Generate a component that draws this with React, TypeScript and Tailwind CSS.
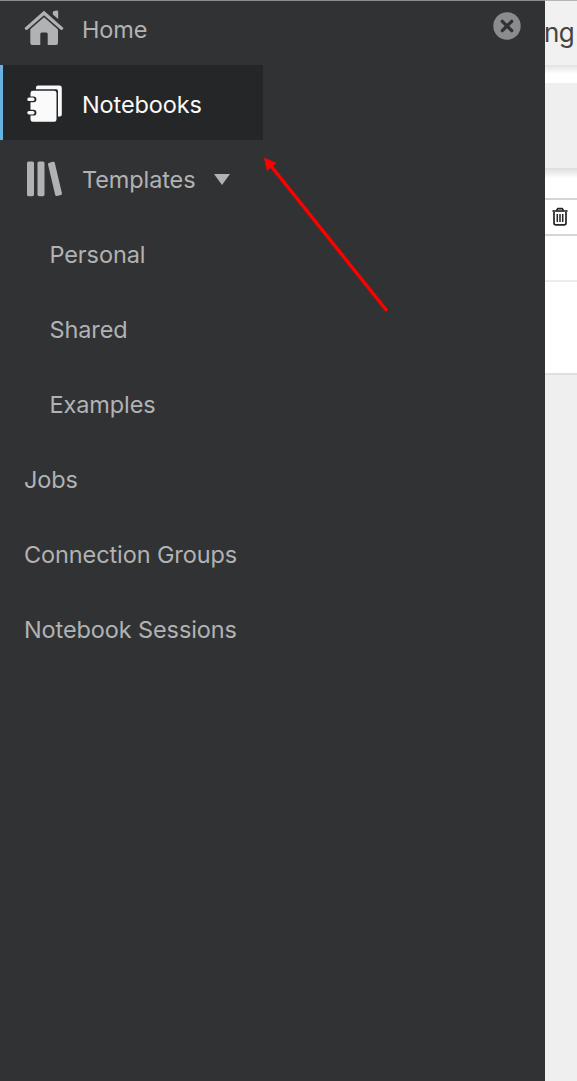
import type { ReactNode } from 'react';

function HomeIcon() {
  return (
    <svg width="40" height="36" viewBox="0 0 40 36" fill="currentColor" aria-hidden="true">
      <path d="M20 .8.8 17.800Q.2 19.800 3 20L20 5.200 37 20q2.800-.2 2.200-2.200Z" />
      <path d="M28.800 2.600Q28.800 1.300 30 1L32.800 .4Q34.200 .3 34.200 1.700V9L28.800 4.500Z" />
      <path d="M20 7.300 6.300 19.200V33q0 2 2 2H16.300V24q0-1.500 1.500-1.500h4.400q1.500 0 1.500 1.500V35H32q2 0 2-2V19.400Z" />
    </svg>
  );
}

function NotebookIcon() {
  return (
    <svg width="36" height="38" viewBox="0 0 36 38" fill="currentColor" aria-hidden="true">
      <path d="M9 2.500Q9 .5 11 .5H32.500Q34.800 .5 34.800 2.800V29.500Q34.800 31.500 32.800 31.500H31V6Q31 4.200 29.200 4.200H9Z" />
      <path d="M6 5.700H27Q29.500 5.700 29.500 8V34.500Q29.500 36.800 27.200 36.800H6Q3.500 36.800 3.500 34.500V30.600H6.500a2.700 2.700 0 0 0 0-5.800H3.500V17.200H6.500a2.700 2.700 0 0 0 0-5.800H3.500V8Q3.500 5.700 6 5.700Z" />
      <rect x=".3" y="12.500" width="7.200" height="3.600" rx="1.700" />
      <rect x=".3" y="25.900" width="7.200" height="3.600" rx="1.700" />
    </svg>
  );
}

function TemplatesIcon() {
  return (
    <svg width="36" height="36" viewBox="0 0 36 36" fill="currentColor" aria-hidden="true">
      <rect x="0" y=".5" width="7" height="34.700" rx="1.600" />
      <rect x="10.500" y=".5" width="7" height="34.700" rx="1.600" />
      <rect x="24.500" y=".8" width="7" height="34.200" rx="1.600" transform="rotate(-13.300 28 18)" />
    </svg>
  );
}

function CloseIcon() {
  return (
    <svg width="28" height="28" viewBox="0 0 28 28" aria-hidden="true">
      <circle cx="14" cy="14" r="13.700" fill="#8a8d8f" />
      <path d="m9.300 9.300 9.400 9.400m0-9.400-9.400 9.400" stroke="#303133" strokeWidth="3.300" strokeLinecap="round" />
    </svg>
  );
}

function TrashIcon() {
  return (
    <svg width="16" height="19" viewBox="0 0 16 19" fill="none" stroke="#252525" aria-hidden="true">
      <path d="M4.500 3.500 5.800 1.500h4.400l1.300 2" fill="#aaa" strokeWidth="1.500" />
      <path d="M.4 4h15.200" strokeWidth="1.600" />
      <path d="M2 5v11q0 1.800 1.800 1.800h8.400q1.800 0 1.800-1.800V5" strokeWidth="1.700" />
      <path d="M5.300 7v8M8 7v8M10.700 7v8" strokeWidth="1.500" />
    </svg>
  );
}

function Item({ icon, label, active = false, sub = false, children }: {
  icon?: ReactNode; label: string; active?: boolean; sub?: boolean; children?: ReactNode;
}) {
  return (
    <a className={`flex h-[75px] w-[263px] shrink-0 items-center whitespace-nowrap border-l-[3px] ${active ? 'border-[#69b3e3] bg-[#252628] text-[#fafafa]' : 'border-transparent text-[#b1b2b4]'} ${sub ? 'pl-[46.500px]' : 'pl-[21px]'}`}>
      {icon && <span className="flex w-[58px] shrink-0">{icon}</span>}
      <span className="pt-[5px] tracking-[-0.11px]">{label}</span>
      {children}
    </a>
  );
}

export default function App() {
  return (
    <div className="relative flex h-[1081px] w-[577px] overflow-hidden bg-[#efefef] font-['Inter',sans-serif] text-[23.500px]">
      <aside className="flex h-full w-[545px] shrink-0 items-start justify-between overflow-hidden border-t border-[#8c8f91] bg-[#313234]">
        <nav className="-mt-[11px] flex flex-col">
          <Item icon={<span className="pt-px"><HomeIcon /></span>} label="Home" />
          <Item icon={<span className="ml-[3px] pt-[3px]"><NotebookIcon /></span>} label="Notebooks" active />
          <Item icon={<span className="ml-[3px] pt-[3px]"><TemplatesIcon /></span>} label="Templates">
            <svg width="16" height="11" viewBox="0 0 16 11" fill="currentColor" className="ml-[19px] mt-[4px]" aria-hidden="true"><path d="M0 0h16L8 11Z" /></svg>
          </Item>
          <Item label="Personal" sub />
          <Item label="Shared" sub />
          <Item label="Examples" sub />
          <Item label="Jobs" />
          <Item label="Connection Groups" />
          <Item label="Notebook Sessions" />
        </nav>
        <button aria-label="Close" className="mr-6 mt-[11px]"><CloseIcon /></button>
      </aside>
      <main className="flex min-w-0 flex-1 flex-col overflow-hidden">
        <header className="flex h-[65px] shrink-0 items-center border-t border-[#b5b5b5] bg-[#f1f1f1] pb-px text-[26px] text-[#444]">
          <span className="-ml-px tracking-[-0.5px]">ng</span>
        </header>
        <div className="h-[18px] shrink-0 bg-linear-to-b from-[#e2e2e2] via-white via-50% to-white" />
        <div className="h-[85px] shrink-0 bg-[#efefef]" />
        <div className="h-[30px] shrink-0 bg-linear-to-b from-[#dedede] via-white via-35% to-white" />
        <div className="flex h-[38px] shrink-0 items-center border-y-2 border-[#d5d5d5] bg-white pb-[2px] pl-[7px]"><TrashIcon /></div>
        <div className="h-[46px] shrink-0 border-b-2 border-[#ececec] bg-white" />
        <div className="h-[93px] shrink-0 border-b-2 border-[#e0e0e0] bg-white" />
      </main>
      <svg className="pointer-events-none absolute left-[263px] top-[156px]" width="127" height="158" viewBox="0 0 127 158" aria-hidden="true">
        <path d="M8 10 124 155" stroke="red" strokeWidth="3.400" />
        <path d="m1 1.500 12.500 5.500L4 15Z" fill="red" />
      </svg>
    </div>
  );
}
